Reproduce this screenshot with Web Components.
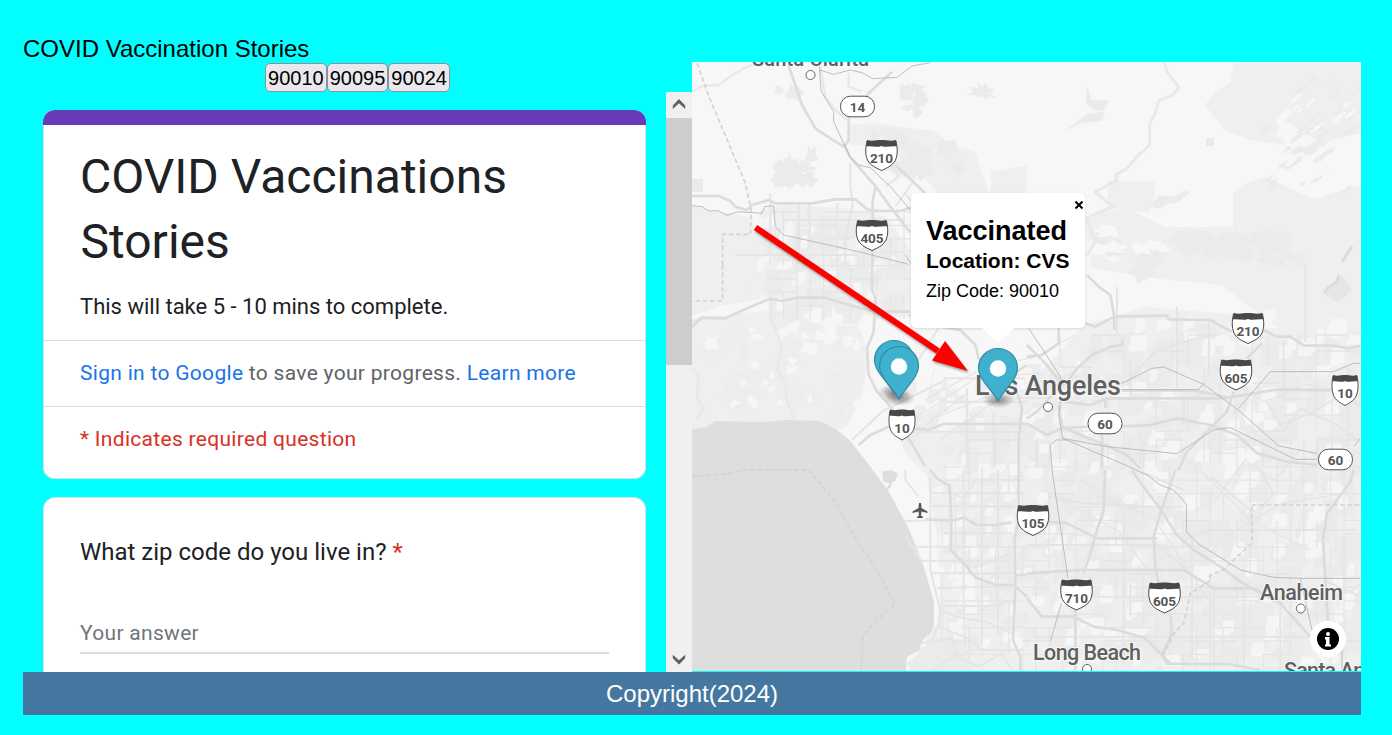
<!DOCTYPE html>
<html lang="en">
<head>
<meta charset="utf-8">
<title>COVID Vaccination Stories</title>
<style>
html,body{margin:0;height:100%;overflow:hidden}
body{background:#0ff;font-family:Arial,"Liberation Sans",sans-serif}
</style>
</head>
<body>
<story-app>
  <span slot="title">COVID Vaccination Stories</span>
  <zip-button slot="zips">90010</zip-button><zip-button slot="zips">90095</zip-button><zip-button slot="zips">90024</zip-button>
  <scroll-pane slot="form">
    <form-intro></form-intro>
    <form-question>What zip code do you live in?</form-question>
  </scroll-pane>
  <city-map slot="map">
    <map-popup>
      <span slot="heading">Vaccinated</span>
      <span slot="place">Location: CVS</span>
      <span slot="zip">Zip Code: 90010</span>
    </map-popup>
  </city-map>
  <span slot="footer">Copyright(2024)</span>
</story-app>

<script>
const define = (name, html, setup) => customElements.define(name, class extends HTMLElement {
  constructor() {
    super();
    const root = this.attachShadow({mode: 'open'});
    root.innerHTML = html;
    if (setup) setup(root, this);
  }
});

define('story-app', `<style>
:host{display:block;box-sizing:border-box;height:735px;padding:35px 31px 20px 23px}
header{height:27px;font-size:24px;line-height:28px;white-space:nowrap}
main{display:grid;grid-template-columns:669px 669px;height:610px}
.left{display:flex;flex-direction:column;min-height:0}
nav{display:flex;justify-content:center;height:30px;box-sizing:border-box;padding-top:1px;align-items:flex-start}
footer{height:43px;background:#4677a1;color:#fff;font-size:24px;line-height:43px;text-align:center}
</style>
<header><slot name="title"></slot></header>
<main><div class="left"><nav><slot name="zips"></slot></nav><slot name="form"></slot></div><slot name="map"></slot></main>
<footer><slot name="footer"></slot></footer>`);

define('zip-button', `<style>
:host{display:block}
button{display:block;box-sizing:border-box;width:61.6px;height:29px;margin:0;padding:1px 1px 0;border:1px solid #8f8f9d;border-radius:5px;background:#e9e9ed;color:#000;font:20px/26px Arial,"Liberation Sans",sans-serif}
</style><button><slot></slot></button>`);

define('scroll-pane', `<style>
:host{display:flex;height:580px;overflow:hidden;font-family:Roboto,sans-serif}
.body{flex:1;box-sizing:border-box;padding:18px 20px 0;overflow:hidden}
.bar{width:26px;background:#f0f0f0;display:flex;flex-direction:column}
.thumb{height:247px;background:#cdcdcd}
.gap{flex:1}
svg{display:block;width:26px;height:26px}
path{fill:#606060}
</style><div class="body"><slot></slot></div>
<div class="bar"><svg viewBox="0 0 26 26"><path d="M13 7L19.2 13.4V17L13 11.2L6.800 17V13.400Z"/></svg><div class="thumb"></div><div class="gap"></div><svg viewBox="0 0 26 26"><path d="M13 18.500L19.200 12.300V8.700L13 14.300L6.800 8.700V12.300Z"/></svg></div>`);

define('form-intro', `<style>
:host{display:block;box-sizing:border-box;height:369px;border-radius:12px;overflow:hidden;background:#fff;color:#202124;margin-bottom:18px}
.top{height:15px;background:#673ab7}
.in{box-sizing:border-box;height:354px;border:1px solid #dadce0;border-top:0;border-radius:0 0 12px 12px}
h1{margin:0;padding:20px 36.500px 0;font-size:48px;font-weight:400;line-height:64.8px;white-space:pre-line}
p{margin:0;padding:0 36.500px;font-size:22px;white-space:nowrap}
.d{padding-top:16px;height:49px;line-height:32px}
.s{border-top:1px solid #dadce0;height:65px;line-height:65px;font-size:21px;letter-spacing:.3px;color:#5f6368}
b{font-weight:400;color:#1a73e8}
.r{color:#d93025}
h1,p{text-indent:-.500px}
</style><div class="top"></div><div class="in"><h1>COVID Vaccinations
Stories</h1><p class="d">This will take 5 - 10 mins to complete.</p><p class="s"><b>Sign in to Google</b> to save your progress. <b>Learn more</b></p><p class="s r">* Indicates required question</p></div>`);

define('form-question', `<style>
:host{display:block;box-sizing:border-box;height:300px;border:1px solid #dadce0;border-radius:12px;background:#fff;padding:36px 36px;color:#202124}
.q{font-size:24px;line-height:36px;height:82px}
i{font-style:normal;color:#d93025}
.a{font-size:21px;line-height:34px;letter-spacing:.3px;color:#70757a;height:36px;border-bottom:2px solid #dcdcdc}
</style><div class="q"><slot></slot> <i>*</i></div><div class="a">Your answer</div>`);

define('map-popup', `<style>
:host{position:absolute;left:219px;top:131px;width:174px;height:135px;box-sizing:border-box;padding:23px 15px 0;background:#fff;border-radius:5px;box-shadow:0 1px 3px rgba(0,0,0,.12);color:#000}
div{white-space:nowrap;font-weight:700}
.h{font-size:27px;line-height:30px}.p{font-size:21px;line-height:30px}.z{font-size:18px;line-height:30px;font-weight:400}
.x{position:absolute;right:1px;top:7px;width:10px;height:10px}
.tip{position:absolute;left:71px;top:135px;width:32px;height:16px}
svg{display:block}
</style><div class="h"><slot name="heading"></slot></div><div class="p"><slot name="place"></slot></div><div class="z"><slot name="zip"></slot></div>
<svg class="x" viewBox="0 0 10 10"><path d="M1.500 1.500L8.500 8.500M8.500 1.500L1.500 8.500" stroke="#000" stroke-width="2"/></svg>
<svg class="tip" viewBox="0 0 32 16"><path d="M0 0H32L16 15.500Z" fill="#fff"/></svg>`);

/* ---- map artwork ---- */
let seed = 11;
const rnd = () => (seed = (seed * 16807) % 2147483647) / 2147483647;

// Ragged land-cover blob around a centre point; tilt skews it into a ridge.
function blob(cx, cy, rx, ry, n = 26, tilt = 0) {
  let d = '';
  for (let i = 0; i < n; i++) {
    const a = i / n * Math.PI * 2, k = .4 + rnd() * .65;
    const x = Math.cos(a) * rx * k, y = Math.sin(a) * ry * k - x * tilt;
    d += (i ? 'L' : 'M') + (cx + x).toFixed(1) + ' ' + (cy + y).toFixed(1);
  }
  return d + 'Z';
}
function scatter(x0, y0, x1, y1, count, lo, hi, tilt = 0) {
  let d = '';
  for (let i = 0; i < count; i++) {
    const r = lo + rnd() * (hi - lo);
    d += blob(x0 + rnd() * (x1 - x0), y0 + rnd() * (y1 - y0), r, tilt ? r * .45 : lo + rnd() * (hi - lo) * .8, 16, tilt);
  }
  return d;
}
// City blocks: stepped, axis-aligned patches.
function blocks(x0, y0, x1, y1, count, lo, hi) {
  let d = '';
  const s = () => (lo + rnd() * (hi - lo)).toFixed(1);
  for (let i = 0; i < count; i++) {
    const x = x0 + rnd() * (x1 - x0), y = y0 + rnd() * (y1 - y0);
    d += `M${x.toFixed(1)} ${y.toFixed(1)}h${s()}v${s()}h-${(lo * rnd()).toFixed(1)}l-1.500 ${(lo * .6).toFixed(1)}H${(x - rnd() * lo).toFixed(1)}v-${(lo * .7).toFixed(1)}Z`;
  }
  return d;
}
// Rectangular grid of local streets with random gaps.
function grid(x0, y0, x1, y1, step, keep) {
  let d = '';
  for (let x = x0; x < x1; x += step) for (let y = y0; y < y1; y += step * 2) if (rnd() < keep) d += `M${x} ${y}v${step * 2}`;
  for (let y = y0; y < y1; y += step) for (let x = x0; x < x1; x += step * 2) if (rnd() < keep) d += `M${x} ${y}h${step * 2}`;
  return d;
}
// Tile groups are drawn at three units per pixel.
const tile = (x, y, s) => `<g transform="translate(${x} ${y}) scale(.33333)">${s}</g>`;
const F = d => `<path class="fw" d="${d}"/>`, R = d => `<path class="rail" d="${d}"/>`, S = d => `<path class="st" d="${d}"/>`, G = d => `<path class="ld" d="${d}"/>`, D = d => `<path class="bd" d="${d}"/>`;

const shield = (x, y, t) => {
  const k = t.length > 2 ? 1 : .83;
  return `<g transform="translate(${x} ${y})"><g transform="scale(${k} 1)"><path d="M-14.500 -14C-9 -11.500 -5 -14 0 -14C5 -14 9 -11.500 14.500 -14C16 -7 16.500 -1 14 5C11 11 5 13 0 15.500C-5 13 -11 11 -14 5C-16.500 -1 -16 -7 -14.500 -14Z" fill="#fff" stroke="#444" stroke-width="1"/><path d="M-14.500 -15C-9 -13.500 -5 -15 0 -15C5 -15 9 -13.500 14.500 -15L15.200 -8.500C10 -9.500 5 -7 0 -9C-5 -7 -10 -9.500 -15.200 -8.500Z" fill="#484848"/></g><text y="8" class="n">${t}</text></g>`;
};
const oval = (x, y, t) => `<g transform="translate(${x} ${y})"><rect x="-17" y="-10.300" width="34" height="20.600" rx="10" fill="#fff" stroke="#555"/><text y="5" class="n">${t}</text></g>`;
const dot = (x, y) => `<circle cx="${x}" cy="${y}" r="4.500" fill="#fff" stroke="#666" stroke-width="1"/>`;
const pin = (x, y) => `<ellipse cx="${x}" cy="${y - 1}" rx="16" ry="8" fill="url(#sh)"/><path transform="translate(${x} ${y})" d="M0 0C-3 -6 -12.500 -16 -16.500 -23C-18.500 -26.500 -19.500 -29 -19.500 -33A19.500 19.500 0 0 1 19.500 -33C19.500 -29 18.500 -26.500 16.500 -23C12.500 -16 3 -6 0 0Z" fill="#3fb1ce" stroke="#318ba2" stroke-width="1.200"/><circle cx="${x}" cy="${y - 32.500}" r="8.200" fill="#fff"/>`;

function artwork() {
  const land =
    // western hills and the Santa Monica mountains
    `<path fill="#efefef" d="M692 206l28 6 30 5 10 22 0 60-40 7-28 10zM692 320l40-6 60-5 30 20 36-4 12 30-8 40-14 30-30 15-30-2-50 4-46 8z"/>` +
    `<path fill="#efefef" d="M848 125l25-2 60 8 20 15 22 5 15 45-40 10-26-28-25-20-20-10-30-4zM991 172l36-6v30l-36 6z"/>` +
    // national forest and foothills
    `<path fill="#efefef" d="M1234 63h127v70l-40 10-46-28 10 30-35-5-25-10-12-15-8-10 10-14 15-8zM1233 193l10-8 22-8 48 22 48-14v150l-80-5-60-45-80-8-50-10-6-50 40-10 40 20h68zM1108 181h47v12l-6 20-41-6z"/>` +
    `<path fill="#ebebeb" d="${scatter(1175,236,1300,262,38,5,14)}${scatter(1100,235,1165,275,9,7,14)}${scatter(1262,118,1355,190,26,5,14,.6)}${scatter(1290,80,1358,120,12,4,9,1)}"/>` +
    `<path fill="#f7f7f7" d="${scatter(1280,90,1358,190,18,4,11,.7)}${scatter(1090,225,1160,262,6,8,18,-.1)}"/>` +
    `<path fill="#ebebeb" d="${scatter(778,155,820,185,12,7,16)}${scatter(778,87,800,98,5,5,11)}${scatter(900,80,922,112,9,4,13)}${scatter(870,135,960,175,20,6,16)}${blob(982,92,18,9,40)}M1065 131l22-17 18-3-3 10-20 2zM1086 100h23l-5 10-8 1-10-7zM1087 85l5 16-6 3zM1206 138h8v8h-8zM692 179h11v13h-11zM1150 205l10-10 12 2 16-7 1 3-12 10-10 1-8 5-8-2z"/>` +
    `<path fill="#ececec" opacity=".7" d="${scatter(697,325,850,415,30,5,18)}"/>` +
    `<path fill="#e6e6e6" d="M1326 289l16-14 10 15-14 13-12-8z"/><path d="M1339 275l-2 7-8 5-5 6M1352 246l-10 16" fill="none" stroke="#dcdcdc" stroke-width="3"/>` +
    // built-up valley, basin and the San Gabriel valley
    `<path fill="#efefef" d="M760 210l25-5 60 3 40 8 30 40 2 60-30 2-52-8-50-5-35-15zM1085 325l60-18 95 8 20 12 101 8v336H925l3-70-20-50-30-60-20-30 20-20 60-35 70 0z"/>`;
  const texture =
    `<path fill="#eaeaea" opacity=".8" d="${blocks(1090,320,1355,655,200,8,26)}${blocks(940,430,1090,645,95,6,20)}${blocks(755,215,895,305,60,6,18)}${blocks(905,360,1085,430,45,6,18)}"/>` +
    `<path fill="#f7f7f7" opacity=".85" d="${blocks(1065,310,1355,660,135,5,16)}${blocks(935,440,1060,650,60,4,13)}${blocks(755,215,895,305,22,4,12)}${blocks(880,320,1060,430,35,6,16)}${scatter(710,320,860,350,14,4,12)}${scatter(730,350,860,410,14,3,9)}"/>` +
    `<path class="min" d="${grid(942,440,1355,668,13.4,.5)}${grid(770,212,905,312,13.4,.5)}${grid(1060,335,1355,440,16,.4)}"/>` +
    `<path class="min" d="M925 400l60-33 50-10 40-22M905 425l70-46 65-6M930 420l60-25 60-8 40-26M918 432l50-40M940 440l60-42 50 0M1060 500l60 32 50 70M1080 480l75 40 60 90M1200 470l50 50 60 30M1220 540l60-36 60-10M1190 400l40-20 35 22 40-18 50 10M1215 500l30-40 30 20 25-30 40 12"/>`;
  // beach strip, bay and peninsula
  const sea = `<path fill="#f7f7f7" d="M850 428l20-14 25 14 12 28 20 20 10 62 3 50-2 36-18 10-60-140z"/>` +
    `<path fill="#dedede" d="M692 429l15-2 8-6 50 1 20-2 35 1c18 9 25 14 33 23L869 465l20 27 20 37 15 38 10 35v22c-2 14-12 10-14 26l-13 7-1 14H692z"/>` +
    `<path fill="#ebebeb" d="M921 648l18-8 24 2 10 29h-62l-4-8 10-8z"/><path fill="#dedede" d="M883 472l8-1 6 3-2 6-5 3-6-2zM892 481l-2 6-6 4" stroke="#dedede" stroke-width="1.500"/>`;

  const roads =
  tile(692,60,
    G('M0 95L30 78L80 75L120 45L165 20L210 8M385 20L400 110L430 150L465 180M470 40V80L510 95M235 400V530M350 430V610M435 430V610M380 540L520 525M580 380L620 350L600 320M610 440L660 370M640 400L670 440')+
    S('M475 310V380L482 430L460 540V610M270 480H640M320 425V610M130 585H500')+
    F('M290 18L305 60L330 135L370 205L420 238L460 262L475 292L550 378L595 440L655 518M600 35L530 100L470 175V240L455 262M610 315L700 400M0 408H80L115 423L130 440L165 450L180 435L230 420L250 430H360L430 418H490L525 448L560 453H625L665 440M551 380L542 420V615')+
    R('M383 12V40L388 95L425 155V185L455 250L475 292L500 315L535 323L600 385L655 450M383 30L425 43L475 30L510 38L542 56L615 52L660 18L715 8M0 437L30 440L50 453L78 452L105 466L140 455L210 460L218 440L245 437L250 500L275 525L500 575L650 613')+
    D('M15 10L55 120L110 250L160 370L178 450L175 523H92V615'))+
  tile(1027,60,
    `<path class="riv" d="M412 8L420 35L455 82L438 105L395 122L385 160L368 190V255L330 290L300 325L265 345L270 360L205 395L225 415L260 440L205 462L180 475L205 545L180 585"/>`)+
  tile(692,265,
    D('M92 0V108H0')+
    G('M235 110L240 170L270 245L255 310L280 360L285 410L305 460M0 310L20 330L15 400L35 430L15 465')+
    S('M0 170L35 155M670 0V165M745 180L670 300L600 370M480 525L570 440L760 345M755 340H1000M760 410H1005M825 370V610M905 440V610M640 500H1000')+
    F('M0 185L30 158L100 160L165 130L232 102L270 108L320 97L400 98L480 122L545 140H655M540 0V75L550 95L545 200L525 250L530 330L555 380L600 430L650 520L700 605M650 150L745 185L805 195L850 240L860 280L910 320M500 540L535 510L590 485L710 494L755 477H1005M1005 300L960 330L990 430L980 520V615')+
    R('M640 -30L660 0'))+
  tile(1027,265,
    S('M270 65V210M300 350L385 260L470 230L555 210M310 290V390M450 125V370M546 165V330M770 225V370M835 0V230M470 395V480M720 410L760 480L860 440L940 390L1000 420M30 610V520M350 530V610M770 500L820 430L930 480L1000 530')+
    F('M180 30L215 65L250 90L262 155L205 185L175 175M262 195V155L420 152L425 163L550 165L595 190L615 200M710 195L750 215H790L830 242H920L960 250L1000 243M285 225V240L250 245L195 270L150 310L125 345L100 365L30 440L0 460M0 240L50 290L100 350M95 420L105 485L160 510L235 540L300 570L340 610M280 485L370 480L450 460L550 480L630 510L690 565L780 590L870 600M100 490L185 485M110 410L190 420L240 400H590L755 373L915 376M705 235L660 280M620 380L600 440L550 490L480 560L455 615M0 475L60 510L105 490M285 376H500L545 385L600 397M235 400V430M225 510V610M0 275L45 270L95 235V190')+
    R('M5 190L45 250L100 335V420L95 450L107 520L240 545L450 566L560 495L610 488L805 583H870M285 355L375 310L410 306L530 358L640 440L755 543L870 565M280 374H515L530 355M635 430L730 320H920L980 295H1000M107 520L325 613M75 615L70 540L88 525H120M980 545L1000 520'))+
  tile(692,470,
    `<path class="bd2" d="M0 20L100 12L150 0H350L430 95L480 190L560 310L610 402L550 455L512 500L508 603"/>`+
    S('M630 152H700M660 230H960M685 272H960M715 20V300L745 420L740 460L720 515M735 355L870 350L960 355M715 310H970M750 408H910L960 390M750 420L790 440L880 455L960 490M815 0V400L820 530M870 0V520M918 0V500M755 190H960M765 60L815 85L850 30H1000M840 295L960 250M740 470L830 505L870 540H1000M640 0V30L680 80M640 200L690 275M720 108H970M720 70H1000M690 520L780 505L800 570M720 600L760 575L840 540M780 550L860 590L930 550L960 600')+
    F('M715 0L735 25L773 48L778 155L776 240L825 290L850 322L910 345H965L1005 380M700 148L780 152L815 143L855 165H910L960 157M980 0V155L968 200L970 350L963 510L985 560V603M970 315H1005'))+
  tile(1027,470,
    S('M65 80L170 100L380 110M0 225H390L480 300M95 380H700M20 500H850M290 130V580M470 210L540 180H990M350 130L210 80M310 340V440M560 340V600M650 350V600M760 380V600M920 380L980 360L1000 340M330 0L470 60M550 20L670 120V180M700 0L740 70L700 120M890 330L1000 380M495 200V570')+
    F('M315 0L345 45L395 110L450 195L500 240L580 290L640 335L710 375L760 400L850 500M445 0L400 130L380 200L385 290L395 340M235 0L230 120L210 180L190 250L170 310M65 155L120 160L210 205H390M0 310L160 300H470L560 355H680L720 375M430 430L435 490L405 555L420 582H600L700 600M145 420V600M0 385L45 440H140L200 470L270 480L355 505L430 580M980 0L970 35L900 130L888 210L895 330L903 460')+
    R('M75 0L123 325M103 400L70 515M325 0L360 15L400 45L440 60L478 102V185L515 222L640 300L740 322L820 325H1000M820 325L855 480M945 500V603')+
    D('M675 105H1000M675 110V220L630 260L590 300L550 315L545 335L490 370L470 460L445 485L405 560'));

  return `<svg viewBox="692 62 669 609" width="669" height="609">
<defs><radialGradient id="sh"><stop offset="0" stop-color="#000" stop-opacity=".42"/><stop offset=".45" stop-color="#000" stop-opacity=".25"/><stop offset="1" stop-color="#000" stop-opacity="0"/></radialGradient></defs>
<rect x="692" y="62" width="669" height="609" fill="#f7f7f7"/>${land}${texture}${sea}${roads}
${shield(881.5,155,'210')}${shield(872,235,'405')}${shield(1248,328,'210')}${shield(1236,374.500,'605')}${shield(1345,390,'10')}${shield(902,424.500,'10')}${shield(1033,520,'105')}${shield(1076.500,594.500,'710')}${shield(1164.500,597.500,'605')}
${oval(857.500,106.500,'14')}${oval(1105,423.500,'60')}${oval(1335.500,459.500,'60')}
${dot(810.500,75)}${dot(1048,407)}${dot(1300.800,608.500)}${dot(1087,669)}
<path fill="#555" d="M919 503h2l.5 5 6 3.500v1.500l-6-1.500-.5 4 2 1.500v1h-6v-1l2-1.500-.5-4-6 1.500v-1.500l6-3.500z"/>
<g class="c"><text x="752" y="66" textLength="117" font-size="20">Santa Clarita</text><text x="975" y="395" textLength="146" font-size="27">Los Angeles</text><text x="1033" y="660" textLength="108" font-size="21.500">Long Beach</text><text x="1260" y="600" textLength="83" font-size="21.500">Anaheim</text><text x="1284" y="678" textLength="92" font-size="21.500">Santa Ana</text></g>
${pin(894,393)}${pin(899,399)}${pin(998,401)}
<g class="arrow"><path d="M755.500 227.500L938 351" stroke="#f00" stroke-width="6"/><path d="M945 341L968 371L932 360.500Z" fill="#f00"/></g>
<circle cx="1328" cy="639" r="18" fill="#fff"/><circle cx="1328" cy="639" r="11"/><path d="M1325 637h4.500v7.500h1.500v2h-6v-2h1v-5h-1z" fill="#fff"/><circle cx="1328" cy="634" r="2" fill="#fff"/>
</svg>`;
}

define('city-map', `<style>
:host{display:block;position:relative;width:669px;height:609px;overflow:hidden}
svg{display:block}
path{stroke-linejoin:round}
.fw{fill:none;stroke:#dcdcdc;stroke-width:8}
.st{fill:none;stroke:#e5e5e5;stroke-width:6}
.ld{fill:none;stroke:#e8e8e8;stroke-width:7}
.riv{fill:none;stroke:#e9e9e9;stroke-width:9}
.rail{fill:none;stroke:#b5b5b5;stroke-width:2.600}
.bd{fill:none;stroke:#d2d2d2;stroke-width:5;stroke-dasharray:14 8}
.bd2{fill:none;stroke:#d2d2d2;stroke-width:4;stroke-dasharray:14 8}
.min{fill:none;stroke:#e5e5e5;stroke-width:1.300}
.n{font:700 13.500px Roboto,sans-serif;fill:#555;text-anchor:middle}
.c{font-family:Roboto,sans-serif;font-weight:500;fill:#606060;stroke:#f7f7f7;stroke-width:2px;paint-order:stroke}
.arrow{filter:drop-shadow(1px 2px 1px rgba(0,0,0,.35))}
</style>${artwork()}<slot></slot>`);
</script>
</body>
</html>
